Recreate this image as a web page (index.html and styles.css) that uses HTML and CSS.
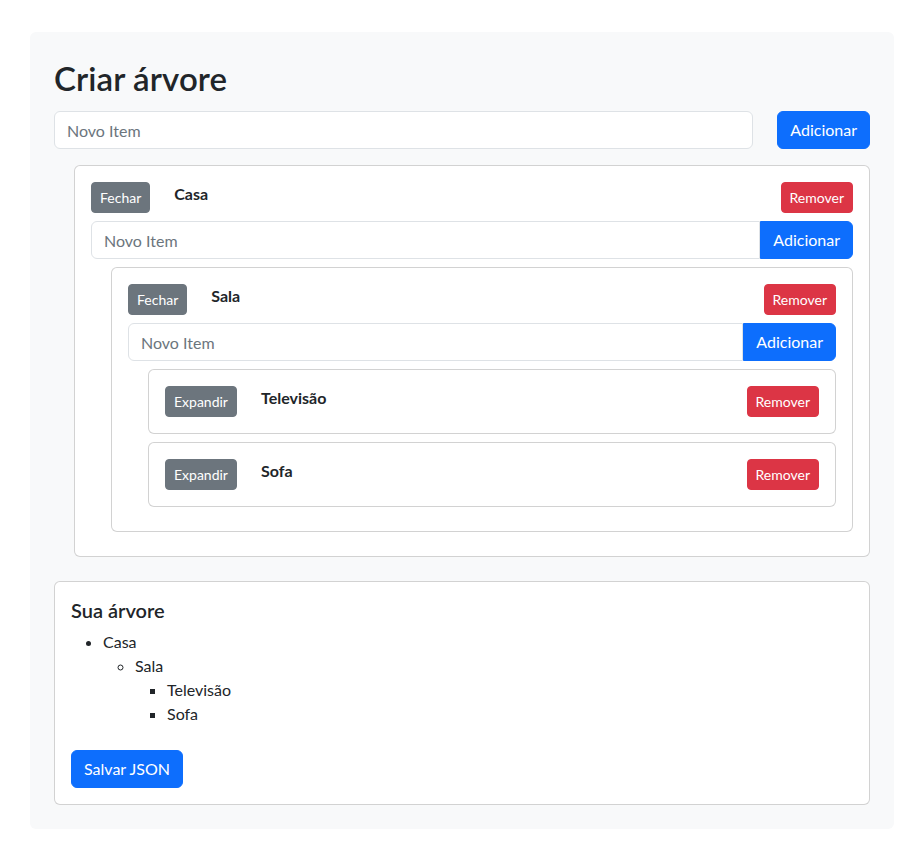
FILE: index.html
```html
<!DOCTYPE html>
<html lang="pt">
<head>
<meta charset="utf-8">
<title>Criar árvore</title>
<link rel="stylesheet" href="styles.css">
</head>
<body>
<div class="app">
  <h1 class="title">Criar árvore</h1>
  <div class="top-form">
    <input class="field" type="text" placeholder="Novo Item">
    <button class="btn btn-primary">Adicionar</button>
  </div>

  <div class="node node-root">
    <div class="node-head">
      <button class="btn btn-sm btn-secondary">Fechar</button>
      <span class="node-name">Casa</span>
      <button class="btn btn-sm btn-danger push">Remover</button>
    </div>
    <div class="input-group">
      <input class="field" type="text" placeholder="Novo Item">
      <button class="btn btn-primary">Adicionar</button>
    </div>

    <div class="node">
      <div class="node-head">
        <button class="btn btn-sm btn-secondary">Fechar</button>
        <span class="node-name">Sala</span>
        <button class="btn btn-sm btn-danger push">Remover</button>
      </div>
      <div class="input-group">
        <input class="field" type="text" placeholder="Novo Item">
        <button class="btn btn-primary">Adicionar</button>
      </div>

      <div class="node">
        <div class="node-head">
          <button class="btn btn-sm btn-secondary">Expandir</button>
          <span class="node-name">Televisão</span>
          <button class="btn btn-sm btn-danger push">Remover</button>
        </div>
      </div>
      <div class="node">
        <div class="node-head">
          <button class="btn btn-sm btn-secondary">Expandir</button>
          <span class="node-name">Sofa</span>
          <button class="btn btn-sm btn-danger push">Remover</button>
        </div>
      </div>
    </div>
  </div>

  <div class="summary">
    <h5 class="summary-title">Sua árvore</h5>
    <ul class="tree">
      <li>Casa
        <ul>
          <li>Sala
            <ul>
              <li>Televisão</li>
              <li>Sofa</li>
            </ul>
          </li>
        </ul>
      </li>
    </ul>
    <button class="btn btn-primary save">Salvar JSON</button>
  </div>
</div>
</body>
</html>
```

FILE: styles.css
```css
* { box-sizing: border-box; }

body {
  margin: 0;
  background: #fff;
  color: #212529;
  font-family: "Lato", "Liberation Sans", sans-serif;
  font-size: 16px;
  line-height: 1.5;
}

.app {
  margin: 32px 28px 34px 30px;
  background: #f8f9fa;
  border-radius: 6px;
  padding: 24px;
}

.title {
  margin: 2px 0 13px;
  font-size: 33px;
  font-weight: 600;
  line-height: 40px;
  letter-spacing: 0.1px;
}

.top-form {
  display: flex;
  gap: 24px;
}

.field {
  flex: 1;
  min-width: 0;
  height: 38px;
  border: 1px solid #dee2e6;
  border-radius: 6px;
  padding: 6px 12px;
  font-family: inherit;
  font-size: 16px;
  color: #212529;
  background: #fff;
}
.field::placeholder { color: #6c757d; }

.btn {
  font-family: inherit;
  font-size: 16px;
  line-height: 24px;
  padding: 6px 12px;
  border: 1px solid transparent;
  border-radius: 6px;
  color: #fff;
  cursor: pointer;
}
.btn-sm {
  font-size: 14px;
  line-height: 21px;
  padding: 4px 8px;
  border-radius: 4px;
}
.btn-primary { background: #0d6efd; border-color: #0d6efd; }
.btn-secondary { background: #6c757d; border-color: #6c757d; }
.btn-danger { background: #dc3545; border-color: #dc3545; }

.node {
  background: #fff;
  border: 1px solid rgba(0, 0, 0, 0.175);
  border-radius: 6px;
  padding: 16px;
  margin: 8px 0 8px 20px;
}
.node-root { margin-top: 16px; }

.node-head {
  display: flex;
  align-items: flex-start;
}
.node-name {
  margin-left: 24px;
  font-weight: 700;
  line-height: 24px;
}
.push { margin-left: auto; }

.input-group {
  display: flex;
  margin-top: 8px;
}
.input-group .field {
  border-radius: 6px 0 0 6px;
}
.input-group .btn {
  border-radius: 0 6px 6px 0;
}

.summary {
  background: #fff;
  border: 1px solid rgba(0, 0, 0, 0.175);
  border-radius: 6px;
  padding: 16px;
  margin-top: 24px;
}
.summary-title {
  margin: 0 0 8px;
  font-size: 20px;
  font-weight: 600;
  line-height: 1.2;
}
.tree, .tree ul {
  margin: 0;
  padding-left: 32px;
}
.tree { margin-bottom: 16px; }
.tree ul { list-style-type: circle; }
.tree ul ul { list-style-type: square; }

.save { margin-top: 8px; }
```
